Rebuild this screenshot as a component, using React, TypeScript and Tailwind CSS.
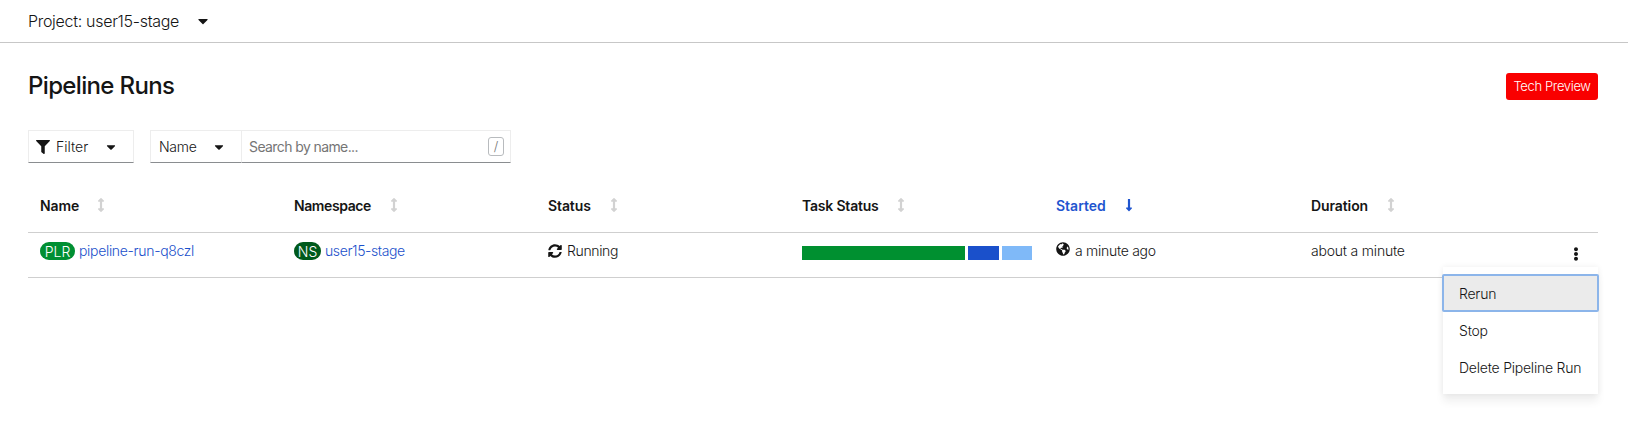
import { FaArrowsAltV, FaCaretDown, FaEllipsisV, FaFilter, FaGlobeAmericas, FaLongArrowAltDown, FaSyncAlt } from 'react-icons/fa';

const columns = [
  { label: 'Name', style: 'w-[38px] tracking-[-0.1px]' },
  { label: 'Namespace', style: 'w-[77px] tracking-[-0.4px]' },
  { label: 'Status', style: 'w-[43px] tracking-[-0.1px]' },
  { label: 'Task Status', style: 'w-[76px] tracking-[-0.2px]' },
  { label: 'Started', style: 'w-[50px]', active: true },
  { label: 'Duration', style: 'w-[57px] tracking-[-0.1px]' },
];

const grid = 'grid grid-cols-[254px_254px_254px_254px_255px_1fr] border-b border-[#cfcfcf]';

function ProjectBar() {
  return (
    <div className="flex h-[43px] items-center border-b border-[#c7c7c7] pb-px pl-7 text-[16px]">
      <span className="w-[151px] tracking-[-0.3px]">Project: user15-stage</span>
      <FaCaretDown className="ml-4 size-4" />
    </div>
  );
}

function Toolbar() {
  return (
    <div className="mt-[30px] flex h-[33px] text-[14px]">
      <button className="flex w-[106px] items-center border border-b-[#8a8d90] border-[#ededed] pl-[7px]">
        <FaFilter className="size-[14px]" />
        <span className="ml-[6px] w-8 text-left">Filter</span>
        <FaCaretDown className="ml-4 size-[14px]" />
      </button>
      <button className="ml-4 flex w-[91px] items-center border border-r-0 border-b-[#8a8d90] border-[#ededed] pl-2">
        <span className="w-[37px] text-left tracking-[-0.3px]">Name</span>
        <FaCaretDown className="ml-4 size-[14px]" />
      </button>
      <div className="flex w-[270px] items-center justify-between border border-b-[#8a8d90] border-[#ededed] pr-[6px] pl-[7px] text-[#757575]">
        <span className="font-normal tracking-[-0.6px]">Search by name...</span>
        <span className="flex h-[19px] w-4 items-center justify-center rounded-[3px] border border-[#b8bbbe] text-[13px]">/</span>
      </div>
    </div>
  );
}

function ActionMenu() {
  return (
    <div className="absolute top-[34px] right-0 flex h-[127px] w-[155px] flex-col bg-white pt-[8px] tracking-[-0.22px] shadow-[0_8px_8px_rgba(3,3,3,0.06),0_0_6px_rgba(3,3,3,0.07)]">
      <div className="mb-px flex h-9 items-center rounded-[1px] bg-[#ebebeb] pl-4 outline-2 -outline-offset-1 outline-[#8cb5ea]">Rerun</div>
      <div className="flex h-[37px] items-center pl-4">Stop</div>
      <div className="flex h-[37px] items-center pl-4">Delete Pipeline Run</div>
    </div>
  );
}

export default function App() {
  return (
    <main className="h-[429px] overflow-hidden bg-white font-['Inter','Liberation_Sans',sans-serif] font-light whitespace-nowrap text-[#151515]">
      <ProjectBar />
      <section className="pr-[30px] pl-7">
        <header className="flex items-start justify-between pt-[29px]">
          <h1 className="text-[24px] leading-7 font-[450] tracking-[-0.65px]">Pipeline Runs</h1>
          <span className="mt-px flex h-[27px] w-[92px] items-center justify-center rounded-[3px] bg-[#f90000] text-[13px] tracking-[-0.35px] text-white">Tech Preview</span>
        </header>
        <Toolbar />
        <div className="text-[14px]">
          <div className={grid + ' h-[70px] pt-[15px] font-semibold'}>
            {columns.map((c) => (
              <div key={c.label} className={'flex items-center pl-3 ' + (c.active ? 'text-[#1f55cf]' : '')}>
                <span className={c.style}>{c.label}</span>
                {c.active ? (
                  <FaLongArrowAltDown className="ml-4 size-[14px]" />
                ) : (
                  <FaArrowsAltV className="ml-4 size-[14px] text-[#d2d2d2]" />
                )}
              </div>
            ))}
          </div>
          <div className={grid + ' relative h-[45px]'}>
            <div className="flex items-start pt-[9px] pl-3">
              <span className="flex h-[18px] w-[35px] items-center justify-center rounded-full bg-[#008f32] text-white">PLR</span>
              <span className="ml-1 leading-[18px] tracking-[-0.32px] text-[#1a50cb]">pipeline-run-q8czl</span>
            </div>
            <div className="flex items-start pt-[9px] pl-3">
              <span className="flex h-[18px] w-[27px] items-center justify-center rounded-full bg-[#005a1c] text-white">NS</span>
              <span className="ml-1 leading-[18px] tracking-[-0.4px] text-[#1a50cb]">user15-stage</span>
            </div>
            <div className="flex items-start pt-[9px] pl-3">
              <FaSyncAlt className="mt-[2px] size-[14px]" />
              <span className="ml-[5px] leading-[18px] tracking-[-0.35px]">Running</span>
            </div>
            <div className="flex gap-[3px] pt-[13px] pl-3">
              <span className="h-[14px] w-[163px] bg-[#009030]" />
              <span className="h-[14px] w-[31px] bg-[#1a50cb]" />
              <span className="h-[14px] w-[30px] bg-[#7fb9f8]" />
            </div>
            <div className="flex items-start pt-[9px] pl-3">
              <FaGlobeAmericas className="size-[14px]" />
              <span className="ml-[5px] leading-[18px] tracking-[-0.28px]">a minute ago</span>
            </div>
            <div className="flex items-start justify-between pt-[9px] pr-[15px] pl-3">
              <span className="leading-[18px] tracking-[-0.2px]">about a minute</span>
              <FaEllipsisV className="mt-[5px] size-[14px]" />
            </div>
            <ActionMenu />
          </div>
        </div>
      </section>
    </main>
  );
}
